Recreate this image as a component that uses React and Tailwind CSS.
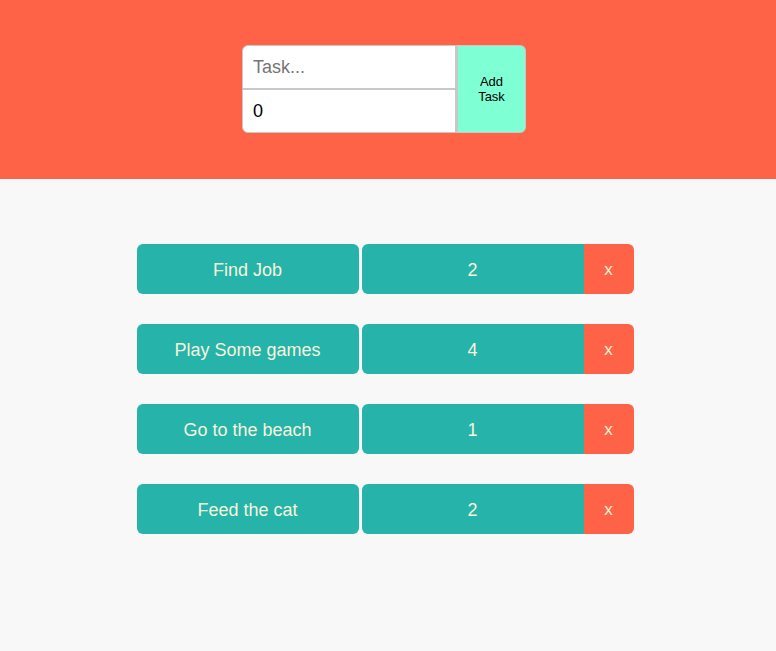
import React, { useState } from 'react';

function App() {
  const [tasks] = useState([
    { name: 'Find Job', count: 2 },
    { name: 'Play Some games', count: 4 },
    { name: 'Go to the beach', count: 1 },
    { name: 'Feed the cat', count: 2 },
  ]);

  return (
    <div className="min-h-screen bg-[#f8f8f8] font-['Liberation_Sans',Arial,sans-serif]">
      {/* Header with form */}
      <header className="h-[179px] bg-[#ff6347] flex justify-center pt-[45px] pr-[8px]">
        <div className="flex h-[88px]">
          <div className="flex flex-col w-[214px]">
            <input
              type="text"
              placeholder="Task..."
              className="h-[44px] bg-white border border-[#c8c8c8] rounded-tl-[6px] px-[10px] text-[18px] text-black placeholder:text-[#757575] outline-none"
            />
            <input
              type="text"
              defaultValue="0"
              className="h-[44px] bg-white border border-[#c8c8c8] rounded-bl-[6px] px-[10px] text-[18px] text-black outline-none"
            />
          </div>
          <button className="w-[70px] h-[88px] bg-[#7fffd4] border border-[#c8c8c8] border-l-2 rounded-r-[6px] text-[13px] leading-[15px] text-black">
            Add
            <br />
            Task
          </button>
        </div>
      </header>

      {/* Task list */}
      <div className="flex flex-col items-center pt-[65px] gap-[30px] pr-[6px]">
        {tasks.map((t) => (
          <div key={t.name} className="flex w-[497px] h-[50px] text-[18px] leading-[22px] text-[#f5f5dc]">
            <div className="w-[222px] bg-[#26b3a9] rounded-[6px] flex items-center justify-center pt-[2px]">
              {t.name}
            </div>
            <div className="w-[222px] ml-[3px] bg-[#26b3a9] rounded-l-[6px] flex items-center justify-center pt-[2px]">
              {t.count}
            </div>
            <button className="w-[50px] bg-[#ff6347] rounded-r-[6px] flex items-center justify-center text-[17px] pt-[1px]">
              x
            </button>
          </div>
        ))}
      </div>
    </div>
  );
}

export default App;
